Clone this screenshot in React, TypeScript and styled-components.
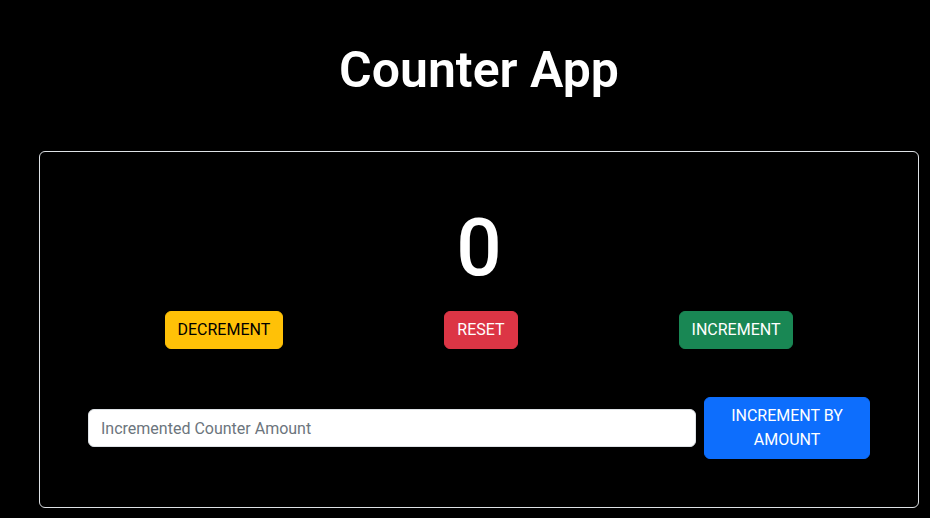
import styled, {createGlobalStyle} from 'styled-components';

const GlobalStyle = createGlobalStyle`
  * {
    box-sizing: border-box;
  }
  body {
    margin: 0;
    background: #000;
    color: #fff;
    font-family: Roboto, 'Liberation Sans', sans-serif;
  }
`;

const Page = styled.div`
  padding: 41px 11px 0 39px;
`;

const Title = styled.h1`
  margin: 0 0 52px;
  font-size: 50px;
  line-height: 58px;
  font-weight: 600;
  text-align: center;
`;

const Card = styled.div`
  border: 1px solid #dee2e6;
  border-radius: 6px;
  padding: 48px;
`;

const Count = styled.div`
  font-size: 80px;
  line-height: 96px;
  font-weight: 500;
  text-align: center;
  margin-bottom: 15px;
`;

const ButtonRow = styled.div`
  display: flex;
  justify-content: space-around;
  margin: 0 -4px 48px;
`;

const variants = {
  warning: {bg: '#ffc107', fg: '#000'},
  danger: {bg: '#dc3545', fg: '#fff'},
  success: {bg: '#198754', fg: '#fff'},
  primary: {bg: '#0d6efd', fg: '#fff'},
};

const Button = styled.button<{$variant: keyof typeof variants}>`
  font-family: Roboto, 'Liberation Sans', sans-serif;
  font-size: 16px;
  line-height: 24px;
  padding: 6px 12px;
  border: 1px solid ${p => variants[p.$variant].bg};
  border-radius: 6px;
  background: ${p => variants[p.$variant].bg};
  color: ${p => variants[p.$variant].fg};
  text-transform: uppercase;
  cursor: pointer;
`;

const AmountRow = styled.div`
  display: flex;
  align-items: center;
  gap: 8px;
`;

const AmountInput = styled.input`
  flex: 1;
  height: 38px;
  font-family: Roboto, 'Liberation Sans', sans-serif;
  font-size: 16px;
  padding: 6px 12px;
  border: 1px solid #dee2e6;
  border-radius: 6px;
  background: #fff;
  color: #212529;
  outline: none;

  &::placeholder {
    color: #6c757d;
  }
`;

const WideButton = styled(Button)`
  width: 166px;
`;

function App() {
  return (
    <>
      <GlobalStyle />
      <Page>
        <Title>Counter App</Title>
        <Card>
          <Count>0</Count>
          <ButtonRow>
            <Button $variant="warning">Decrement</Button>
            <Button $variant="danger">Reset</Button>
            <Button $variant="success">Increment</Button>
          </ButtonRow>
          <AmountRow>
            <AmountInput placeholder="Incremented Counter Amount" />
            <WideButton $variant="primary">Increment by amount</WideButton>
          </AmountRow>
        </Card>
      </Page>
    </>
  );
}

export default App;
